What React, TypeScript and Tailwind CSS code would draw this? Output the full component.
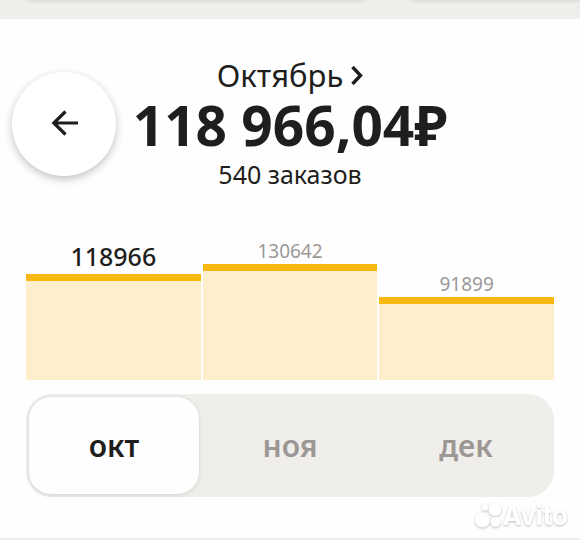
import { useState } from "react";
import clsx from "clsx";

const MONTHS = [
  { id: "oct", label: "окт", total: "118966", height: 106 },
  { id: "nov", label: "ноя", total: "130642", height: 116 },
  { id: "dec", label: "дек", total: "91899", height: 83 },
];

function AvitoMark() {
  return (
    <div className="absolute right-3 bottom-2 flex items-center text-white drop-shadow-[0_1px_1px_rgba(0,0,0,0.25)]">
      <svg width="29" height="28" viewBox="0 0 29 28" fill="currentColor" aria-hidden="true">
        <circle cx="11" cy="5.5" r="3.2" />
        <circle cx="21" cy="7.5" r="6.5" />
        <circle cx="8.5" cy="18" r="7.5" />
        <circle cx="21.5" cy="20" r="5" />
      </svg>
      <span className="font-['Inter',sans-serif] text-[26px] leading-8 font-bold">Avito</span>
    </div>
  );
}

export default function App() {
  const [active, setActive] = useState("oct");

  return (
    <div className="relative bg-[#fefefe] font-['Noto_Sans',sans-serif] text-[#1f1e1c]">
      {/* Lower edge of the cards above */}
      <div className="flex h-[19px] gap-12 overflow-hidden bg-[#f0eeea] pl-7">
        <div className="-mt-2 h-2 flex-[2] shadow-[0_1px_4px_rgba(0,0,0,0.12)]" />
        <div className="-mt-2 h-2 flex-1 shadow-[0_1px_4px_rgba(0,0,0,0.12)]" />
      </div>

      <header className="grid grid-cols-[104px_1fr_104px] items-center px-3 pt-9">
        <button
          type="button"
          aria-label="Назад"
          className="flex size-26 items-center justify-center rounded-full bg-white shadow-[0_3px_8px_rgba(0,0,0,0.24)]"
        >
          <svg
            width="28"
            height="28"
            viewBox="0 0 28 28"
            fill="none"
            stroke="currentColor"
            strokeWidth="3.2"
            aria-hidden="true"
          >
            <path d="M15.5 1.5 3.8 13l11.7 11.5M4 13h24" />
          </svg>
        </button>

        <div className="flex flex-col items-center whitespace-nowrap">
          <button type="button" className="flex items-center gap-2 text-[31px] leading-10">
            Октябрь
            <svg
              width="12"
              height="20"
              viewBox="0 0 12 20"
              fill="none"
              stroke="currentColor"
              strokeWidth="3.4"
              aria-hidden="true"
            >
              <path d="m1.5 2 8 8.5-8 8.5" />
            </svg>
          </button>
          <h1 className="text-[55px] leading-[60px] font-bold">118 966,04₽</h1>
          <p className="text-[25px] leading-[38px]">540 заказов</p>
        </div>
      </header>

      {/* Chart */}
      <div className="flex h-[187px] items-end gap-0.5 px-[26px]">
        {MONTHS.map(({ id, total, height }) => (
          <div key={id} className="flex-1 text-center">
            <div
              className={clsx(
                id === active
                  ? "text-[25px] leading-9 font-medium"
                  : "text-[19px] leading-[26px] text-[#9b9998]"
              )}
            >
              {total}
            </div>
            <div className="border-t-7 border-[#f7b810] bg-[#fdefcc]" style={{ height }} />
          </div>
        ))}
      </div>

      {/* Month switch */}
      <div className="border-b-2 border-[#eeeeee] px-[26px] pt-3.5 pb-[41px]">
        <div role="tablist" className="grid grid-cols-3 rounded-[26px] bg-[#f0eeeb]">
          {MONTHS.map(({ id, label }) => (
            <button
              key={id}
              type="button"
              role="tab"
              aria-selected={id === active}
              onClick={() => setActive(id)}
              className={clsx(
                "m-[3px] h-[97px] rounded-[22px] text-[30px] font-semibold",
                id === active
                  ? "bg-[#fefefe] shadow-[0_1px_4px_rgba(0,0,0,0.12)]"
                  : "text-[#9c9794]"
              )}
            >
              {label}
            </button>
          ))}
        </div>
      </div>

      <AvitoMark />
    </div>
  );
}
